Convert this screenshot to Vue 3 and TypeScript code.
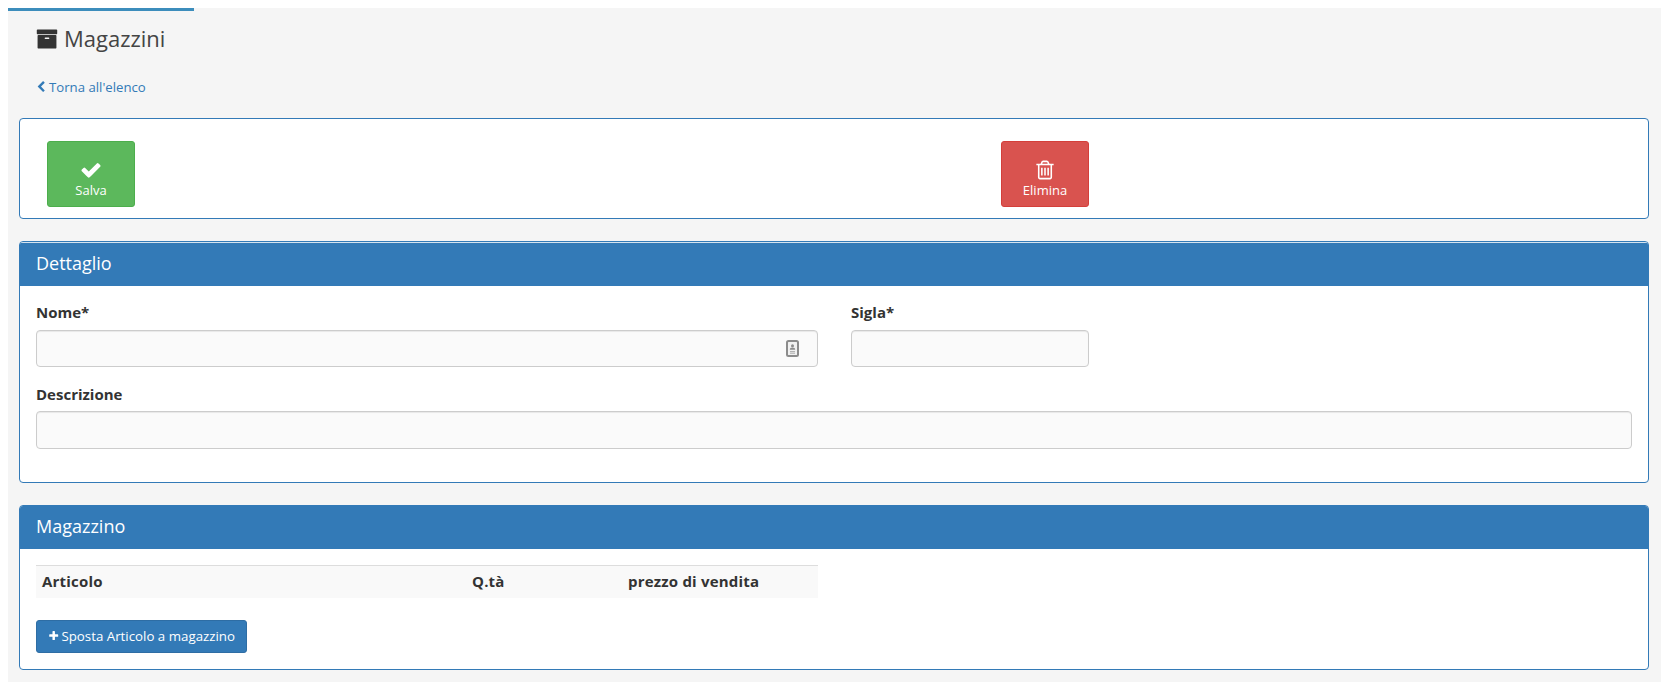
<script setup lang="ts">
const columns: { label: string; width: number }[] = [
  { label: 'Articolo', width: 430 },
  { label: 'Q.tà', width: 156 },
  { label: 'prezzo di vendita', width: 196 },
]
</script>

<template>
  <div class="page">
    <div class="tabbar"><span class="tab"></span></div>
    <header class="head">
      <h1 class="title">
        <svg class="ico-archive" viewBox="0 0 1792 1792"><path d="M1088 832q0-26-19-45t-45-19h-256q-26 0-45 19t-19 45 19 45 45 19h256q26 0 45-19t19-45zm576-192v960q0 26-19 45t-45 19h-1408q-26 0-45-19t-19-45v-960q0-26 19-45t45-19h1408q26 0 45 19t19 45zm64-448v256q0 26-19 45t-45 19h-1536q-26 0-45-19t-19-45v-256q0-26 19-45t45-19h1536q26 0 45 19t19 45z"/></svg>
        Magazzini
      </h1>
      <a class="back" href="#">
        <svg class="ico-back" viewBox="0 0 1792 1792"><path d="M1427 301l-531 531 531 531q19 19 19 45t-19 45l-166 166q-19 19-45 19t-45-19l-742-742q-19-19-19-45t19-45l742-742q19-19 45-19t45 19l166 166q19 19 19 45t-19 45z"/></svg>
        Torna all'elenco
      </a>
    </header>

    <section class="panel actions">
      <button class="action save" type="button">
        <svg class="ico-action" viewBox="0 0 1792 1792"><path d="M1671 566q0 40-28 68l-724 724-136 136q-28 28-68 28t-68-28l-136-136-362-362q-28-28-28-68t28-68l136-136q28-28 68-28t68 28l294 295 656-657q28-28 68-28t68 28l136 136q28 28 28 68z"/></svg>
        <span>Salva</span>
      </button>
      <button class="action del" type="button">
        <svg class="ico-action" viewBox="0 0 1792 1792"><path d="M704 736v576q0 14-9 23t-23 9h-64q-14 0-23-9t-9-23v-576q0-14 9-23t23-9h64q14 0 23 9t9 23zm256 0v576q0 14-9 23t-23 9h-64q-14 0-23-9t-9-23v-576q0-14 9-23t23-9h64q14 0 23 9t9 23zm256 0v576q0 14-9 23t-23 9h-64q-14 0-23-9t-9-23v-576q0-14 9-23t23-9h64q14 0 23 9t9 23zm128 724v-948h-896v948q0 22 7 40.5t14.5 27 10.5 8.5h832q3 0 10.5-8.5t14.5-27 7-40.5zm-672-1076h448l-48-117q-7-9-17-11h-317q-10 2-17 11zm928 32v64q0 14-9 23t-23 9h-96v948q0 83-47 143.5t-113 60.5h-832q-66 0-113-58.5t-47-141.5v-952h-96q-14 0-23-9t-9-23v-64q0-14 9-23t23-9h309l70-167q15-37 54-63t79-26h320q40 0 79 26t54 63l70 167h309q14 0 23 9t9 23z"/></svg>
        <span>Elimina</span>
      </button>
    </section>

    <section class="panel detail">
      <h2 class="panel-head">Dettaglio</h2>
      <div class="panel-body">
        <div class="row">
          <div class="field nome">
            <label>Nome*</label>
            <div class="input-wrap">
              <input class="input" type="text" />
              <svg class="ico-contact" viewBox="0 0 13 17">
                <rect x="1" y="1" width="11" height="15" rx="1.5" fill="#f1f1f1" stroke="#8c8c8c" stroke-width="2"/>
                <circle cx="6.5" cy="5.8" r="1.5" fill="#8c8c8c"/>
                <path d="M3.8 9.8q0-2.2 2.7-2.2t2.7 2.2z" fill="#8c8c8c"/>
                <path d="M4 11.6h5M4 13.2h5" stroke="#adadad" stroke-width="1"/>
              </svg>
            </div>
          </div>
          <div class="field sigla">
            <label>Sigla*</label>
            <input class="input" type="text" />
          </div>
        </div>
        <div class="field desc">
          <label>Descrizione</label>
          <input class="input tall" type="text" />
        </div>
      </div>
    </section>

    <section class="panel store">
      <h2 class="panel-head">Magazzino</h2>
      <div class="panel-body store-body">
        <table class="table">
          <thead>
            <tr>
              <th v-for="c in columns" :key="c.label" :style="{ width: c.width + 'px' }">{{ c.label }}</th>
            </tr>
          </thead>
        </table>
        <button class="move" type="button">
          <svg class="ico-plus" viewBox="0 0 1792 1792"><path d="M1600 736v192q0 40-28 68t-68 28h-416v416q0 40-28 68t-68 28h-192q-40 0-68-28t-28-68v-416h-416q-40 0-68-28t-28-68v-192q0-40 28-68t68-28h416v-416q0-40 28-68t68-28h192q40 0 68 28t28 68v416h416q40 0 68 28t28 68z"/></svg>
          Sposta Articolo a magazzino
        </button>
      </div>
    </section>
  </div>
</template>

<style>
html, body { margin: 0; background: #fff; }
</style>

<style scoped>
.page {
  box-sizing: border-box;
  margin: 8px 0 0 8px;
  height: 674px;
  padding: 0 12px 0 11px;
  background: #f5f5f5;
  font-family: "Open Sans", sans-serif;
  color: #333;
  font-size: 13px;
  overflow: hidden;
}
.tabbar { height: 3px; margin: 0 -12px 0 -11px; }
.tab { display: block; width: 186px; height: 3px; background: #3c8dbc; }
.head { padding: 0 0 0 17px; height: 107px; box-sizing: border-box; }
.title {
  margin: 0;
  padding-top: 12px;
  display: flex;
  align-items: center;
  gap: 6px;
  font-size: 22px;
  font-weight: 400;
  line-height: 31px;
  color: #444;
}
.ico-archive { width: 22px; height: 22px; fill: #333; }
.back {
  display: flex;
  align-items: center;
  gap: 2px;
  margin-top: 24px;
  color: #337ab7;
  font-size: 13.2px;
  line-height: 18px;
  text-decoration: none;
}
.ico-back { width: 12px; height: 14px; margin-left: -1px; fill: #337ab7; }
.panel {
  box-sizing: border-box;
  background: #fff;
  border: 1px solid #337ab7;
  border-radius: 4px;
  margin-bottom: 22px;
  overflow: hidden;
}
.actions {
  height: 101px;
  padding: 22px 0 0 27px;
  display: grid;
  grid-template-columns: 954px 88px;
  align-items: start;
}
.action {
  box-sizing: border-box;
  width: 88px;
  height: 66px;
  padding: 17px 0 0;
  border: 1px solid;
  border-radius: 3px;
  color: #fff;
  font: 400 13px/18px "Open Sans", sans-serif;
  display: flex;
  flex-direction: column;
  align-items: center;
}
.save { background: #5cb85c; border-color: #4cae4c; }
.del { background: #d9534f; border-color: #d43f3a; }
.ico-action { width: 22px; height: 22px; fill: #fff; }
.panel-head {
  margin: 0;
  height: 43px;
  padding: 0 16px;
  background: #337ab7;
  color: #fff;
  font-size: 18px;
  font-weight: 400;
  line-height: 41px;
}
.detail .panel-head { height: 44px; border-top: 1px solid #d6e4f0; box-sizing: border-box; }
.panel-body { padding: 0 16px; }
.detail { height: 242px; }
.store { height: 165px; margin-bottom: 0; }
.row { display: flex; gap: 33px; padding-top: 15px; }
.field label {
  display: block;
  font-size: 15px;
  font-weight: 700;
  line-height: 22px;
  margin-bottom: 7px;
  color: #333;
}
.nome { width: 782px; }
.sigla { width: 238px; }
.desc { margin-top: 16px; }
.desc label { margin-bottom: 6px; }
.input-wrap { position: relative; }
.input {
  display: block;
  box-sizing: border-box;
  width: 100%;
  height: 37px;
  border: 1px solid #ccc;
  border-radius: 4px;
  background: #fafafa;
  box-shadow: inset 0 1px 1px rgba(0, 0, 0, 0.075);
  outline: none;
}
.tall { height: 38px; }
.ico-contact {
  position: absolute;
  right: 19px;
  top: 10px;
  width: 13px;
  height: 17px;
}
.store-body { padding-top: 16px; }
.table {
  width: 782px;
  border-collapse: collapse;
  table-layout: fixed;
}
.table th {
  box-sizing: border-box;
  height: 32px;
  padding: 0 6px 2px;
  background: #f9f9f9;
  border-top: 1px solid #ddd;
  text-align: left;
  font-size: 15px;
  font-weight: 700;
  letter-spacing: 0.2px;
  color: #333;
}
.move {
  display: flex;
  align-items: center;
  gap: 2px;
  box-sizing: border-box;
  width: 211px;
  height: 33px;
  margin-top: 22px;
  padding: 0 11px;
  border: 1px solid #2e6da4;
  border-radius: 3px;
  background: #337ab7;
  color: #fff;
  font: 400 13.3px/18px "Open Sans", sans-serif;
  white-space: nowrap;
}
.ico-plus { width: 14px; height: 14px; fill: #fff; }
</style>
